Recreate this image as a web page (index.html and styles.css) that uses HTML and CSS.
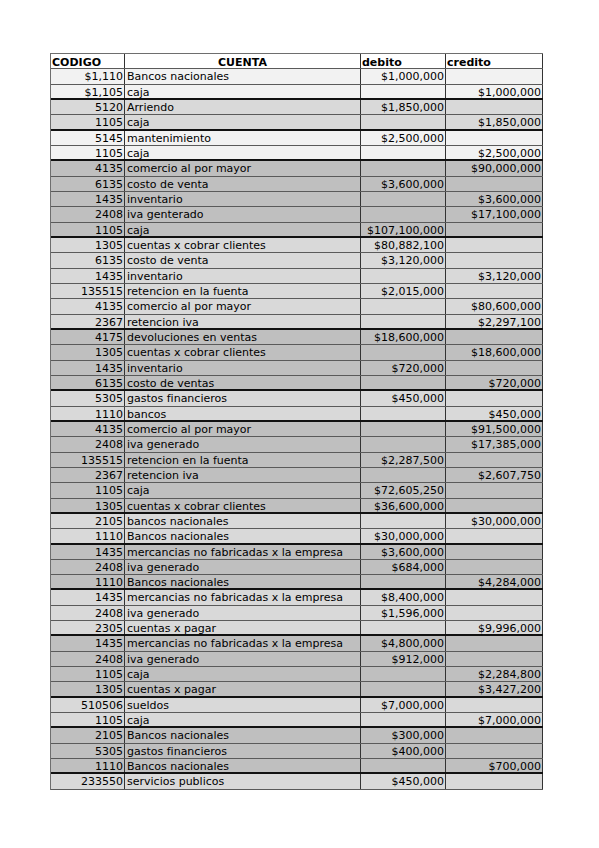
FILE: index.html
```html
<!DOCTYPE html>
<html lang="es">
<head>
<meta charset="utf-8">
<title>Libro diario</title>
<link rel="stylesheet" href="styles.css">
</head>
<body>
<div class="sheet">
  <div class="row head">
    <div class="c code">CODIGO</div><div class="c acct center">CUENTA</div><div class="c">debito</div><div class="c">credito</div>
  </div>

  <div class="row g0"><div class="c num">$1,110</div><div class="c">Bancos nacionales</div><div class="c num">$1,000,000</div><div class="c num"></div></div>
  <div class="row g0 end"><div class="c num">$1,105</div><div class="c">caja</div><div class="c num"></div><div class="c num">$1,000,000</div></div>

  <div class="row g1"><div class="c num">5120</div><div class="c">Arriendo</div><div class="c num">$1,850,000</div><div class="c num"></div></div>
  <div class="row g1 end"><div class="c num">1105</div><div class="c">caja</div><div class="c num"></div><div class="c num">$1,850,000</div></div>

  <div class="row g0"><div class="c num">5145</div><div class="c">mantenimiento</div><div class="c num">$2,500,000</div><div class="c num"></div></div>
  <div class="row g0 end"><div class="c num">1105</div><div class="c">caja</div><div class="c num"></div><div class="c num">$2,500,000</div></div>

  <div class="row g2"><div class="c num">4135</div><div class="c">comercio al por mayor</div><div class="c num"></div><div class="c num">$90,000,000</div></div>
  <div class="row g2"><div class="c num">6135</div><div class="c">costo de venta</div><div class="c num">$3,600,000</div><div class="c num"></div></div>
  <div class="row g2"><div class="c num">1435</div><div class="c">inventario</div><div class="c num"></div><div class="c num">$3,600,000</div></div>
  <div class="row g2"><div class="c num">2408</div><div class="c">iva genterado</div><div class="c num"></div><div class="c num">$17,100,000</div></div>
  <div class="row g2 end"><div class="c num">1105</div><div class="c">caja</div><div class="c num">$107,100,000</div><div class="c num"></div></div>

  <div class="row g1"><div class="c num">1305</div><div class="c">cuentas x cobrar clientes</div><div class="c num">$80,882,100</div><div class="c num"></div></div>
  <div class="row g1"><div class="c num">6135</div><div class="c">costo de venta</div><div class="c num">$3,120,000</div><div class="c num"></div></div>
  <div class="row g1"><div class="c num">1435</div><div class="c">inventario</div><div class="c num"></div><div class="c num">$3,120,000</div></div>
  <div class="row g1"><div class="c num">135515</div><div class="c">retencion en la fuenta</div><div class="c num">$2,015,000</div><div class="c num"></div></div>
  <div class="row g1"><div class="c num">4135</div><div class="c">comercio al por mayor</div><div class="c num"></div><div class="c num">$80,600,000</div></div>
  <div class="row g1 end"><div class="c num">2367</div><div class="c">retencion iva</div><div class="c num"></div><div class="c num">$2,297,100</div></div>

  <div class="row g2"><div class="c num">4175</div><div class="c">devoluciones en ventas</div><div class="c num">$18,600,000</div><div class="c num"></div></div>
  <div class="row g2"><div class="c num">1305</div><div class="c">cuentas x cobrar clientes</div><div class="c num"></div><div class="c num">$18,600,000</div></div>
  <div class="row g2"><div class="c num">1435</div><div class="c">inventario</div><div class="c num">$720,000</div><div class="c num"></div></div>
  <div class="row g2 end"><div class="c num">6135</div><div class="c">costo de ventas</div><div class="c num"></div><div class="c num">$720,000</div></div>

  <div class="row g1"><div class="c num">5305</div><div class="c">gastos financieros</div><div class="c num">$450,000</div><div class="c num"></div></div>
  <div class="row g1 end"><div class="c num">1110</div><div class="c">bancos</div><div class="c num"></div><div class="c num">$450,000</div></div>

  <div class="row g2"><div class="c num">4135</div><div class="c">comercio al por mayor</div><div class="c num"></div><div class="c num">$91,500,000</div></div>
  <div class="row g2"><div class="c num">2408</div><div class="c">iva generado</div><div class="c num"></div><div class="c num">$17,385,000</div></div>
  <div class="row g2"><div class="c num">135515</div><div class="c">retencion en la fuenta</div><div class="c num">$2,287,500</div><div class="c num"></div></div>
  <div class="row g2"><div class="c num">2367</div><div class="c">retencion iva</div><div class="c num"></div><div class="c num">$2,607,750</div></div>
  <div class="row g2"><div class="c num">1105</div><div class="c">caja</div><div class="c num">$72,605,250</div><div class="c num"></div></div>
  <div class="row g2 end"><div class="c num">1305</div><div class="c">cuentas x cobrar clientes</div><div class="c num">$36,600,000</div><div class="c num"></div></div>

  <div class="row g1"><div class="c num">2105</div><div class="c">bancos nacionales</div><div class="c num"></div><div class="c num">$30,000,000</div></div>
  <div class="row g1 end"><div class="c num">1110</div><div class="c">Bancos nacionales</div><div class="c num">$30,000,000</div><div class="c num"></div></div>

  <div class="row g2"><div class="c num">1435</div><div class="c">mercancias no fabricadas x la empresa</div><div class="c num">$3,600,000</div><div class="c num"></div></div>
  <div class="row g2"><div class="c num">2408</div><div class="c">iva generado</div><div class="c num">$684,000</div><div class="c num"></div></div>
  <div class="row g2 end"><div class="c num">1110</div><div class="c">Bancos nacionales</div><div class="c num"></div><div class="c num">$4,284,000</div></div>

  <div class="row g1"><div class="c num">1435</div><div class="c">mercancias no fabricadas x la empresa</div><div class="c num">$8,400,000</div><div class="c num"></div></div>
  <div class="row g1"><div class="c num">2408</div><div class="c">iva generado</div><div class="c num">$1,596,000</div><div class="c num"></div></div>
  <div class="row g1 end"><div class="c num">2305</div><div class="c">cuentas x pagar</div><div class="c num"></div><div class="c num">$9,996,000</div></div>

  <div class="row g2"><div class="c num">1435</div><div class="c">mercancias no fabricadas x la empresa</div><div class="c num">$4,800,000</div><div class="c num"></div></div>
  <div class="row g2"><div class="c num">2408</div><div class="c">iva generado</div><div class="c num">$912,000</div><div class="c num"></div></div>
  <div class="row g2"><div class="c num">1105</div><div class="c">caja</div><div class="c num"></div><div class="c num">$2,284,800</div></div>
  <div class="row g2 end"><div class="c num">1305</div><div class="c">cuentas x pagar</div><div class="c num"></div><div class="c num">$3,427,200</div></div>

  <div class="row g1"><div class="c num">510506</div><div class="c">sueldos</div><div class="c num">$7,000,000</div><div class="c num"></div></div>
  <div class="row g1 end"><div class="c num">1105</div><div class="c">caja</div><div class="c num"></div><div class="c num">$7,000,000</div></div>

  <div class="row g2"><div class="c num">2105</div><div class="c">Bancos nacionales</div><div class="c num">$300,000</div><div class="c num"></div></div>
  <div class="row g2"><div class="c num">5305</div><div class="c">gastos financieros</div><div class="c num">$400,000</div><div class="c num"></div></div>
  <div class="row g2 end"><div class="c num">1110</div><div class="c">Bancos nacionales</div><div class="c num"></div><div class="c num">$700,000</div></div>

  <div class="row g1"><div class="c num">233550</div><div class="c">servicios publicos</div><div class="c num">$450,000</div><div class="c num"></div></div>
</div>
</body>
</html>
```

FILE: styles.css
```css
html, body {
  margin: 0;
  padding: 0;
  background: #ffffff;
}

body {
  padding: 53px 0 0 50px;
  font-family: "DejaVu Sans", Verdana, sans-serif;
  font-size: 11px;
  color: #000;
}

.sheet {
  width: 493px;
  border-top: 1px solid #6e6e6e;
  border-left: 1px solid #6e6e6e;
  box-sizing: border-box;
}

.row {
  display: grid;
  grid-template-columns: 74px 236px 85px 97px;
  grid-template-rows: minmax(0, 1fr);
  height: 15.33px;
  box-sizing: border-box;
  border-bottom: 1px solid #5a5a5a;
}

.row.end {
  border-bottom: 2px solid #111;
}

.c {
  box-sizing: border-box;
  border-right: 1px solid #333;
  padding: 1px 1px 0 2px;
  line-height: 14px;
  white-space: nowrap;
  overflow: visible;
}

.num {
  text-align: right;
}

.center {
  text-align: center;
}

.head {
  background: #ffffff;
  font-weight: bold;
}

.head .c {
  padding-top: 2px;
  padding-left: 1px;
}

.g0 { background: #f2f2f2; }
.g1 { background: #d9d9d9; }
.g2 { background: #bfbfbf; }
```
